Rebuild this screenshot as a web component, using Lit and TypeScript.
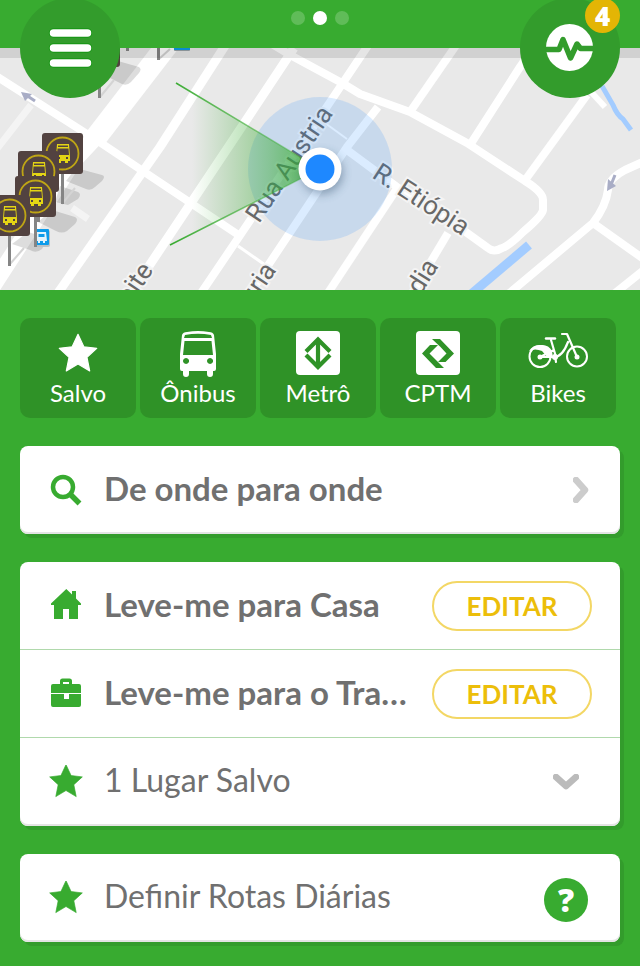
import { LitElement, html, css, svg } from "lit";
import { customElement } from "lit/decorators.js";

const star = "M50 2 65 34 98 38 73 61 80 96 50 78 20 96 27 61 2 38 35 34Z";

const icons = {
  star: html`<svg width="34" height="34" viewBox="0 3 100 100" aria-hidden="true"><path d=${star} fill="currentColor" stroke="currentColor" stroke-width="2" stroke-linejoin="round" /></svg>`,
  search: html`<svg width="34" height="34" viewBox="0 0 34 34" aria-hidden="true"><circle cx="14" cy="14" r="10" fill="none" stroke="currentColor" stroke-width="4.500" /><path d="M21 21 30.500 30.500" stroke="currentColor" stroke-width="5.500" /></svg>`,
  home: html`<svg width="34" height="34" viewBox="0 2 34 34" aria-hidden="true"><path d="M17.300 2 23 7.500V4h4v7.500l5 5V18H29V32H20V22H14V32H5V18H2V16.500Z" fill="currentColor" /></svg>`,
  work: html`<svg width="34" height="34" viewBox="0 2 34 34" aria-hidden="true"><path fill="currentColor" fill-rule="evenodd" d="M11 9V6a2.500 2.500 0 0 1 2.500-2.500h7A2.500 2.500 0 0 1 23 6v3h7a2 2 0 0 1 2 2v7H2v-7a2 2 0 0 1 2-2ZM14 9h6V7h-6ZM2 19h13v5h5v-5h12v11a2 2 0 0 1-2 2H4a2 2 0 0 1-2-2Z" /></svg>`,
};

const tiles = [
  { label: "Salvo", icon: html`<svg width="42" height="46" viewBox="0 0 42 46" aria-hidden="true"><g transform="translate(1.500 2.500) scale(.39)"><path d=${star} fill="#fff" stroke="#fff" stroke-width="3" stroke-linejoin="round" /></g></svg>` },
  { label: "Ônibus", icon: html`<svg width="36" height="46" viewBox="0 0 36 46" aria-hidden="true"><path fill="#fff" fill-rule="evenodd" d="M2 4Q3 1 7 1Q18-1 29 1Q33 1 34 4L36 23V38Q36 40 34 40H33V43a3 3 0 0 1-6 0V40H9V43a3 3 0 0 1-6 0V40H2Q0 40 0 38V23ZM5 4 4 7H32L31 4Q18 1.500 5 4ZM4.500 10 3 24H33L31.500 10ZM6 27a3 3 0 1 0 .1 0ZM30 27a3 3 0 1 0 .1 0Z" /></svg>` },
  { label: "Metrô", icon: html`<svg width="44" height="46" viewBox="0 0 44 46" aria-hidden="true"><rect width="44" height="44" rx="4" fill="#fff" /><path d="M10 20.500 22 8.500 34 20.500M10 24 22 36 34 24M22 8V36" fill="none" stroke="#2f9227" stroke-width="4.200" /></svg>` },
  { label: "CPTM", icon: html`<svg width="44" height="46" viewBox="0 0 44 46" aria-hidden="true"><rect width="44" height="44" rx="4" fill="#fff" /><path d="M16 8H24L38 22.500 29.500 31H22L30.500 22.500 24.500 16ZM14 14H22L13.500 22.500 28 37H20L6 22.500Z" fill="#2f9227" /></svg>` },
  { label: "Bikes", icon: html`<svg width="60" height="46" viewBox="0 0 60 46" aria-hidden="true"><g fill="none" stroke="#fff" stroke-linecap="round" stroke-linejoin="round"><circle cx="12" cy="25.500" r="10.500" stroke-width="2" /><circle cx="49" cy="25.500" r="10" stroke-width="2" /><path d="M12 26 25 26Q34 27 40 11M12 26 26 19M23 9 28 26M27 25 28 31M49 26 39 3H34" stroke-width="2.200" /><path d="M18 7.500H27" stroke-width="2.400" /></g><path d="M1 20Q5 13 14 14Q21 14 24 20L25 27H20L14 20Q7 17 1 20Z" fill="#fff" /><circle cx="12" cy="26" r="2.500" fill="#fff" /><circle cx="49" cy="26" r="2.500" fill="#fff" /><circle cx="27" cy="26" r="3" fill="#fff" /></svg>` },
];

const roads: [string, number][] = [
  ["M-4 76 98 141 240 236", 8],
  ["M168 44 94 140", 22],
  ["M104 128 74 160 -10 290", 17],
  ["M230 38 160 147 60 290 52 302", 9],
  ["M294 48 233 140 125 302", 9],
  ["M272 44 292 56 342 83 360 94 410 112 467 143 525 181Q543 192 543 200V210Q542 216 523 232Q509 246 502 248Q494 253 488 248L463 230 397 187 347 150", 8],
  ["M238 246 268 267", 3],
  ["M325 123 347 139", 2],
  ["M369 44 320 117 195 302", 8],
  ["M378 107 347 147 267 267 245 302", 8],
  ["M457 44 410 112", 8],
  ["M533 48 520 67 470 145", 8],
  ["M587 95 523 183", 8],
  ["M580 80 605 107", 6],
  ["M645 161 625 170Q608 179 608 190 606 206 593 223L500 301", 8],
  ["M593 223 645 260", 8],
  ["M645 269 604 302", 8],
  ["M396 190 322 302", 8],
  ["M448 233 408 300", 8],
];

const stops = [[42, 133], [18, 151], [15, 176], [-11, 195]];

const busStop = ([x, y]: number[]) => svg`
  <g transform="translate(${x} ${y})">
    <path d="M20.500 40V71" stroke="#858585" stroke-width="3" />
    <rect width="41" height="41" rx="3" fill="#524240" />
    <circle cx="20.500" cy="20.500" r="16" fill="none" stroke="#bea515" stroke-width="1.800" />
    <path fill="#e4d514" fill-rule="evenodd" d="M15 11h12l1 13v4h-2v2h-3v-2h-4v2h-3v-2h-2v-4ZM16 12.500v1.500h10v-1.500ZM15.500 15.500 15 22h12l-.5-6.500ZM16 24v2h2v-2ZM24 24v2h2v-2Z" />
  </g>`;

@customElement("city-map")
class CityMap extends LitElement {
  static styles = css`
    :host { display: block; height: 242px; background: #e9e9e9; overflow: hidden; }
    svg { display: block; width: 100%; height: 100%; }
    .road { fill: none; stroke: #fff; stroke-linejoin: round; }
    .street { font: 26px Roboto, "Liberation Sans", sans-serif; fill: #686868; stroke: #f4f4f4; stroke-width: 4px; paint-order: stroke; }
  `;

  render() {
    return html`
      <svg viewBox="0 48 640 242" preserveAspectRatio="xMidYMid slice" role="img" aria-label="Mapa">
        <defs>
          <linearGradient id="view" gradientUnits="userSpaceOnUse" x1="192" y1="0" x2="310" y2="0">
            <stop offset="0" stop-color="#38ab30" stop-opacity="0" />
            <stop offset=".65" stop-color="#38ab30" stop-opacity=".45" />
            <stop offset="1" stop-color="#38ab30" stop-opacity=".75" />
          </linearGradient>
          <linearGradient id="edge" gradientUnits="userSpaceOnUse" x1="170" y1="0" x2="320" y2="0">
            <stop offset="0" stop-color="#38ab30" />
            <stop offset="1" stop-color="#38ab30" stop-opacity=".2" />
          </linearGradient>
          <filter id="soft" x="-50%" y="-50%" width="200%" height="200%"><feGaussianBlur stdDeviation="5" /></filter>
        </defs>
        <rect y="48" width="640" height="242" fill="#e9e9e9" />
        <path d="M31 105 -4 150M72 208 88 219" class="road" stroke-width="7" opacity=".5" />
        ${roads.map(([d, w]) => svg`<path class="road" d=${d} stroke-width=${w} />`)}
        <path d="M602 86 613 105Q617 115 623 119L631 130" fill="none" stroke="#a3ccff" stroke-width="5" />
        <path d="M529 245 470 295" stroke="#a3ccff" stroke-width="9" />
        <g fill="#a9adc6" stroke="#a9adc6">
          <path d="M21 92 32 94 25 101Z" stroke="none" /><path d="M26 95 35 101" stroke-width="3" />
          <path d="M607 191 608 179 616 186Z" stroke="none" /><path d="M611 185 615 175" stroke-width="3" />
        </g>
        <g fill="#000" opacity=".13">
          <path d="M76 168 102 175Q106 176 102 181L95 187Q91 191 86 189L66 181Z" />
          <path d="M60 186 78 192Q82 194 78 199L68 205 55 202Z" />
          <path d="M52 210 75 217Q79 219 75 224L67 231Q62 234 56 231L38 222Z" />
          <path d="M28 232 48 238 42 249Q36 254 30 250L12 244Z" />
          <path d="M118 61 139 67Q142 69 139 73L131 82Q127 86 122 84L108 77Z" />
        </g>
        <path d="M62 204 75 188M10 264 24 248M100 97 114 80M159 59 170 49" stroke="#d4d4d4" stroke-width="2" />
        <path d="M99.500 60V98M158.500 40V60M127.500 40V51" stroke="#858585" stroke-width="3" />
        <rect x="79" y="26" width="41" height="41" rx="3" fill="#524240" />
        <rect x="174" y="40" width="16" height="11" rx="1" fill="#9aa4aa" /><rect x="174" y="39" width="16" height="11" fill="#0c9bea" />
        <rect x="34" y="230" width="16" height="17" rx="2" fill="#b9c1c6" />
        <rect x="34" y="229" width="15" height="16" rx="1" fill="#0c9bea" />
        <path fill="#e4f4fd" fill-rule="evenodd" d="M37 232h9l1 9h-2v2h-2v-2h-3v2h-2v-2h-2ZM38.500 234v3h6v-3Z" />
        ${stops.map(busStop)}
        <path d="M35.500 217V247" stroke="#858585" stroke-width="3" />

        <text class="street" transform="translate(154 270) rotate(-56)" text-anchor="end">oite</text>
        <text class="street" transform="translate(277 270) rotate(-56)" text-anchor="end">uria</text>
        <text class="street" transform="translate(439 266) rotate(-58)" text-anchor="end">dia</text>
        <text class="street" transform="translate(371 177) rotate(33)">R. Etiópia</text>
        <text class="street" transform="translate(259 224) rotate(-56)">Rua Austria</text>
        <circle cx="320" cy="169" r="72" fill="#1e88ff" opacity=".16" />
        <path d="M176 83 320 169 170 245Z" fill="url(#view)" />
        <path d="M176 83 320 169 170 245" fill="none" stroke="url(#edge)" stroke-width="1.500" />
        <circle cx="322" cy="173" r="21" fill="#24405c" opacity=".4" filter="url(#soft)" />
        <circle cx="320" cy="169" r="21.500" fill="#fff" />
        <circle cx="320" cy="169" r="14.500" fill="#1e88ff" />
        <rect y="48" width="640" height="10" opacity=".1" />
      </svg>`;
  }
}

@customElement("app-root")
class AppRoot extends LitElement {
  static styles = css`
    :host { display: block; min-height: 100vh; background: #38ab30; color: #707070; font-family: Lato, "Liberation Sans", sans-serif; }
    * { box-sizing: border-box; }
    button { border: 0; padding: 0; margin: 0; background: none; font: inherit; color: inherit; cursor: pointer; }
    a { color: inherit; text-decoration: none; }
    svg { display: block; flex: none; }
    .top { position: relative; height: 48px; display: flex; justify-content: center; padding-top: 11px; gap: 8px; }
    .dot { width: 14px; height: 14px; border-radius: 50%; background: #60bc59; }
    .dot.on { background: #fff; }
    .round { position: absolute; top: -2px; width: 100px; height: 100px; border-radius: 50%; background: #339c2c; display: grid; place-items: center; z-index: 1; }
    .menu { left: 20px; }
    .pulse { right: 20px; }
    .badge { position: absolute; right: 0; top: 0; width: 35px; height: 35px; border-radius: 50%; background: #e3b505; color: #fff; font-family: "Open Sans", Lato, sans-serif; font-size: 26px; line-height: 36px; font-weight: 800; text-align: center; }
    .tiles { display: grid; grid-template-columns: repeat(5, 1fr); gap: 4px; padding: 28px 24px 28px 20px; }
    .tile { height: 100px; border-radius: 10px; background: #2f9227; color: #fff; display: flex; flex-direction: column; align-items: center; padding-top: 13px; font-size: 24px; line-height: 32px; }
    .cards { display: flex; flex-direction: column; gap: 28px; padding: 0 20px 24px; }
    .card { border-radius: 8px; background: #fff; box-shadow: inset 0 -2px 0 #e4e4e4, 4px 4px 0 #339c2c; }
    .row { display: flex; align-items: center; height: 88px; padding: 0 28px 0 29px; }
    .row:not(:last-child) { border-bottom: 1px solid #b0d9ac; }
    .go { flex: 1; min-width: 0; display: flex; align-items: center; gap: 21px; text-align: left; font-size: 32px; line-height: 40px; color: #38ab30; }
    .go.strong { font-size: 33px; font-weight: 700; }
    .label { color: #707070; overflow: hidden; text-overflow: ellipsis; white-space: nowrap; padding-bottom: 4px; }
    .edit { width: 160px; height: 50px; margin-left: 24px; border: 2px solid #f3d765; border-radius: 25px; color: #ecbe0a; font-size: 26px; font-weight: 700; }
    .help { width: 44px; height: 44px; margin: 4px 4px 0 0; border-radius: 50%; background: #38ab30; color: #fff; font-family: "Open Sans", Lato, sans-serif; font-size: 32px; line-height: 44px; font-weight: 800; }
    .chev { margin-right: 3px; }
    .chev.down { margin-right: 13px; }
  `;

  row(icon: unknown, label: string, strong: boolean, end: unknown) {
    return html`<div class="row"><a href="#" class="go ${strong ? "strong" : ""}">${icon}<span class="label">${label}</span></a>${end}</div>`;
  }

  render() {
    const edit = html`<button class="edit">EDITAR</button>`;
    return html`
      <header class="top">
        <button class="round menu" aria-label="Menu">
          <svg width="44" height="40" viewBox="0 0 44 40"><path d="M5.500 5H39.500M5.500 20H39.500M5.500 35H39.500" stroke="#159512" stroke-width="9.500" stroke-linecap="round" /><path d="M5.500 5H39.500M5.500 20H39.500M5.500 35H39.500" stroke="#fff" stroke-width="7.500" stroke-linecap="round" /></svg>
        </button>
        <span class="dot"></span><span class="dot on"></span><span class="dot"></span>
        <button class="round pulse" aria-label="Alertas">
          <svg width="48" height="48" viewBox="0 0 48 48"><circle cx="23.500" cy="23.500" r="23.500" fill="#fff" /><path d="M0 25.500H13L17 15.500 24.500 34 31 20 34.500 24.500H48" fill="none" stroke="#339c2c" stroke-width="5.500" stroke-linejoin="round" /></svg>
          <span class="badge">4</span>
        </button>
      </header>
      <city-map></city-map>
      <nav class="tiles">
        ${tiles.map((t) => html`<button class="tile">${t.icon}<span>${t.label}</span></button>`)}
      </nav>
      <main class="cards">
        <section class="card">
          ${this.row(icons.search, "De onde para onde", true, html`<svg class="chev" width="16" height="26" viewBox="0 0 16 26"><path d="M3 3 12 13 3 23" fill="none" stroke="#ccc" stroke-width="6.500" stroke-linecap="round" stroke-linejoin="round" /></svg>`)}
        </section>
        <section class="card">
          ${this.row(icons.home, "Leve-me para Casa", true, edit)}
          ${this.row(icons.work, "Leve-me para o Trabalho", true, edit)}
          ${this.row(icons.star, "1 Lugar Salvo", false, html`<svg class="chev down" width="26" height="16" viewBox="0 0 26 16"><path d="M3 3 13 12 23 3" fill="none" stroke="#bbb" stroke-width="6.500" stroke-linecap="round" stroke-linejoin="round" /></svg>`)}
        </section>
        <section class="card">
          ${this.row(icons.star, "Definir Rotas Diárias", false, html`<button class="help" aria-label="Ajuda">?</button>`)}
        </section>
      </main>`;
  }
}
